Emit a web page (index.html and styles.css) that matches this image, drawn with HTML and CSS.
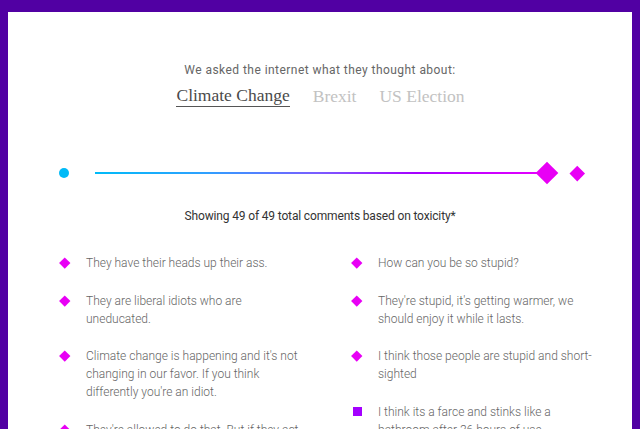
FILE: index.html
```html
<!DOCTYPE html>
<html>
<head>
<meta charset="utf-8">
<link rel="stylesheet" href="styles.css">
</head>
<body>
<main class="panel">
  <p class="tagline">We asked the internet what they thought about:</p>
  <nav class="tabs">
    <span class="tab active">Climate Change</span>
    <span class="tab">Brexit</span>
    <span class="tab">US Election</span>
  </nav>
  <div class="slider">
    <span class="dot"></span>
    <span class="track"></span>
    <span class="handle"></span>
    <span class="end"></span>
  </div>
  <p class="showing">Showing 49 of 49 total comments based on toxicity*</p>
  <section class="comments">
    <ul class="col">
      <li class="item"><span class="mark"></span><span class="txt">They have their heads up their ass.</span></li>
      <li class="item"><span class="mark"></span><span class="txt">They are liberal idiots who are uneducated.</span></li>
      <li class="item"><span class="mark"></span><span class="txt">Climate change is happening and it's not changing in our favor. If you think differently you're an idiot.</span></li>
      <li class="item"><span class="mark"></span><span class="txt">They're allowed to do that. But if they act like idiots they will be called idiots.</span></li>
    </ul>
    <ul class="col">
      <li class="item"><span class="mark"></span><span class="txt">How can you be so stupid?</span></li>
      <li class="item"><span class="mark"></span><span class="txt">They're stupid, it's getting warmer, we should enjoy it while it lasts.</span></li>
      <li class="item"><span class="mark"></span><span class="txt">I think those people are stupid and short-sighted</span></li>
      <li class="item"><span class="mark square"></span><span class="txt">I think its a farce and stinks like a bathroom after 36 hours of use.</span></li>
    </ul>
  </section>
</main>
</body>
</html>
```
FILE: styles.css
```css
html, body {
  margin: 0;
  padding: 0;
  height: 100%;
  overflow: hidden;
}
body {
  background: #5100a3;
  font-family: Roboto, "Liberation Sans", sans-serif;
}
.panel {
  background: #fff;
  margin: 12px 8px 0 8px;
  min-height: 600px;
  padding-top: 50px;
  box-sizing: border-box;
}
.tagline {
  margin: 0;
  text-align: center;
  font-size: 12px;
  line-height: 16px;
  letter-spacing: 0.45px;
  color: #666;
  font-weight: 400;
}
.tabs {
  display: flex;
  justify-content: center;
  gap: 23px;
  margin-top: 7px;
  font-family: "Liberation Serif", serif;
  font-size: 17.5px;
  line-height: 22px;
  padding-left: 1px;
}
.tab {
  color: #c2c2c2;
}
.tab.active {
  color: #4a4a4a;
  border-bottom: 1px solid #555;
  line-height: 20px;
  padding-bottom: 1px;
}
.slider {
  display: flex;
  align-items: center;
  height: 24px;
  margin-top: 54px;
  padding-left: 51px;
}
.dot {
  width: 10px;
  height: 10px;
  border-radius: 50%;
  background: #00baf7;
}
.track {
  width: 446px;
  height: 2.5px;
  margin-left: 26px;
  background: linear-gradient(to right, #00bbf8 0%, #2fa0ff 25%, #7a5cff 50%, #a600ff 72%, #e600ff 100%);
}
.handle {
  width: 16px;
  height: 16px;
  background: #e800f5;
  transform: rotate(45deg);
  margin-left: -2px;
}
.end {
  width: 10.5px;
  height: 10.5px;
  background: #e800f5;
  transform: rotate(45deg);
  margin-left: 17px;
}
.showing {
  margin: 23px 0 0 0;
  text-align: center;
  font-size: 12px;
  line-height: 16px;
  letter-spacing: -0.15px;
  color: #333;
}
.comments {
  display: grid;
  grid-template-columns: 292px 1fr;
  padding-left: 50px;
  margin-top: 30px;
}
.col {
  list-style: none;
  margin: 0;
  padding: 0;
}
.item {
  display: flex;
  align-items: flex-start;
  margin-bottom: 19.5px;
}
.mark {
  flex: none;
  width: 7.5px;
  height: 7.5px;
  margin: 5.25px 17.25px 0 3.25px;
  background: #e800f5;
  transform: rotate(45deg);
}
.mark.square {
  transform: none;
  width: 9px;
  height: 9px;
  margin: 4.5px 16.5px 0 2.5px;
  background: #a400ff;
}
.txt {
  width: 218px;
  font-size: 12px;
  line-height: 18px;
  font-weight: 300;
  color: #666;
}
```
